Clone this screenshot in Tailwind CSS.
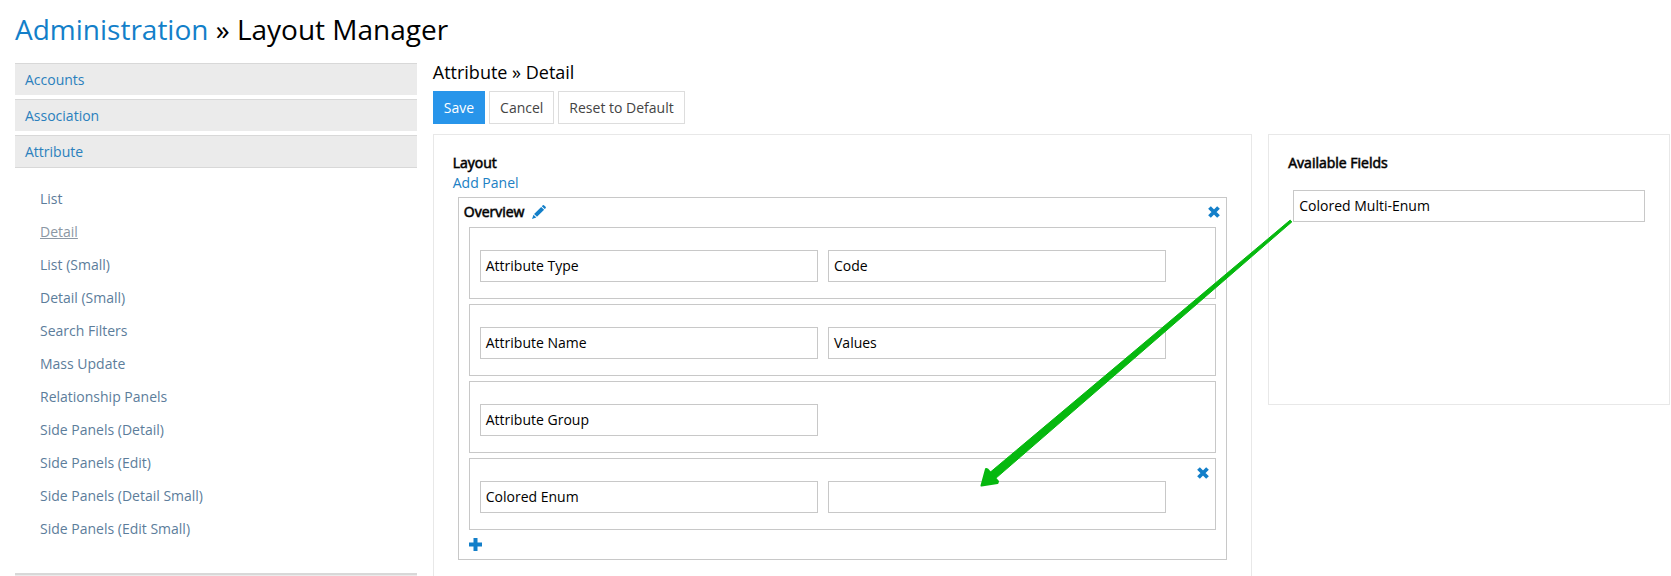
<!DOCTYPE html>
<html lang="en">
<head>
<meta charset="utf-8">
<meta name="viewport" content="width=device-width, initial-scale=1">
<title>Layout Manager</title>
<script src="https://cdn.jsdelivr.net/npm/@tailwindcss/browser@4"></script>
</head>
<body class="relative h-screen overflow-hidden bg-white pl-[15px] pr-px font-['Open_Sans',sans-serif] text-sm text-black">
<header class="pt-[9px] pb-3">
  <h1 class="text-[28px] leading-10"><a href="#" class="text-[#137fc9]">Administration</a> » Layout Manager</h1>
</header>
<div class="grid grid-cols-4 gap-4 pt-0.5">
  <nav aria-label="Layouts" class="flex flex-col gap-1">
    <a href="#" class="h-8 border-t border-[#d8d8d8] bg-[#ebebeb] px-2.5 py-1.5 leading-5 text-[#2a80bd]">Accounts</a>
    <a href="#" class="h-8 border-t border-[#d8d8d8] bg-[#ebebeb] px-2.5 py-1.5 leading-5 text-[#2a80bd]">Association</a>
    <div>
      <a href="#" class="block border-y border-[#d8d8d8] bg-[#ebebeb] px-2.5 pt-1.5 pb-[5px] leading-5 text-[#2a80bd]">Attribute</a>
      <ul class="flex flex-col gap-[13px] pt-[21px] pb-[34px] pl-[25px] leading-5 text-[#5c7d9b]">
        <li><a href="#">List</a></li>
        <li><a href="#" aria-current="page" class="text-[#8b97a4] underline">Detail</a></li>
        <li><a href="#">List (Small)</a></li>
        <li><a href="#">Detail (Small)</a></li>
        <li><a href="#">Search Filters</a></li>
        <li><a href="#">Mass Update</a></li>
        <li><a href="#">Relationship Panels</a></li>
        <li><a href="#">Side Panels (Detail)</a></li>
        <li><a href="#">Side Panels (Edit)</a></li>
        <li><a href="#">Side Panels (Detail Small)</a></li>
        <li><a href="#">Side Panels (Edit Small)</a></li>
      </ul>
      <div class="h-8 border-t-2 border-[#d8d8d8] bg-[#ebebeb]"></div>
    </div>
  </nav>
  <main class="col-span-3">
    <h2 class="pb-2.5 text-lg leading-[18px]">Attribute » Detail</h2>
    <div class="flex gap-1 leading-5 text-[#444]">
      <button type="button" class="border border-[#2895ea] bg-[#2895ea] px-2.5 pt-1.5 pb-[5px] text-white">Save</button>
      <button type="button" class="border border-[#ddd] px-2.5 pt-1.5 pb-[5px]">Cancel</button>
      <button type="button" class="border border-[#ddd] px-2.5 pt-1.5 pb-[5px]">Reset to Default</button>
    </div>
    <div class="grid grid-cols-3 items-start gap-4 pt-2.5">
      <section class="col-span-2 border border-[#e8e8e8] px-[19px] pt-[18px] pb-10">
        <h3 class="pb-px leading-[19px] [-webkit-text-stroke:1px_#00000099]">Layout</h3>
        <a href="#" class="block leading-[19px] text-[#2080c4]">Add Panel</a>
        <div class="mx-[5px] mt-[5px] border border-[#c8c8c8] px-2.5 pb-2">
          <div class="-mx-[5px] flex items-center gap-2 pt-1 pb-1.5 leading-[19px]">
            <h4 class="[-webkit-text-stroke:1px_#00000099]">Overview</h4>
            <button type="button" aria-label="Edit panel" class="text-[#137fc9]">
              <svg class="size-3.5" viewBox="0 0 14 14" fill="currentColor"><path d="M10.800 0.300Q11.500-.2 12.200.4L13.600 1.800Q14.200 2.500 13.600 3.200L12.700 4.100 9.800 1.300ZM9.200 1.900 12.100 4.700 5 11.800 2.100 9ZM1.500 9.700 4.300 12.500 0 14Z"/></svg>
            </button>
            <button type="button" aria-label="Remove panel" class="mr-px ml-auto text-[#137fc9]">
              <svg class="size-3" viewBox="0 0 12 12" fill="none" stroke="currentColor" stroke-width="3.800"><path d="M1.500 1.500 10.500 10.500M10.500 1.500 1.500 10.500"/></svg>
            </button>
          </div>
          <ul class="flex flex-col gap-[5px] leading-5">
            <li class="border border-[#c8c8c8] px-2.5 pt-[22px] pb-4">
              <ul class="mr-[39px] grid grid-cols-2 gap-2.5">
                <li class="h-8 border border-[#c8c8c8] px-[5px] py-[5px]">Attribute Type</li>
                <li class="h-8 border border-[#c8c8c8] px-[5px] py-[5px]">Code</li>
              </ul>
            </li>
            <li class="border border-[#c8c8c8] px-2.5 pt-[22px] pb-4">
              <ul class="mr-[39px] grid grid-cols-2 gap-2.5">
                <li class="h-8 border border-[#c8c8c8] px-[5px] py-[5px]">Attribute Name</li>
                <li class="h-8 border border-[#c8c8c8] px-[5px] py-[5px]">Values</li>
              </ul>
            </li>
            <li class="border border-[#c8c8c8] px-2.5 pt-[22px] pb-4">
              <ul class="mr-[39px] grid grid-cols-2 gap-2.5">
                <li class="h-8 border border-[#c8c8c8] px-[5px] py-[5px]">Attribute Group</li>
              </ul>
            </li>
            <li class="relative border border-[#c8c8c8] px-2.5 pt-[22px] pb-4">
              <ul class="mr-[39px] grid grid-cols-2 gap-2.5">
                <li class="h-8 border border-[#c8c8c8] px-[5px] py-[5px]">Colored Enum</li>
                <li class="h-8 border border-[#c8c8c8] px-[5px] py-[5px]"></li>
              </ul>
              <button type="button" aria-label="Remove row" class="absolute top-2 right-1.5 text-[#137fc9]">
                <svg class="size-3" viewBox="0 0 12 12" fill="none" stroke="currentColor" stroke-width="3.800"><path d="M1.500 1.500 10.500 10.500M10.500 1.500 1.500 10.500"/></svg>
              </button>
            </li>
          </ul>
          <button type="button" aria-label="Add row" class="mt-2 block text-[#137fc9]">
            <svg class="size-[13px]" viewBox="0 0 13 13" fill="none" stroke="currentColor" stroke-width="4"><path d="M6.500 0V13M0 6.500H13"/></svg>
          </button>
        </div>
      </section>
      <section class="min-h-[271px] border border-[#e8e8e8] px-[19px] pt-[18px]">
        <h3 class="pb-px leading-[19px] [-webkit-text-stroke:1px_#00000099]">Available Fields</h3>
        <ul class="mx-[5px] mt-[17px] leading-5">
          <li class="h-8 border border-[#c8c8c8] px-[5px] py-[5px]">Colored Multi-Enum</li>
        </ul>
      </section>
    </div>
  </main>
</div>
<!-- Drag hint from the available field to the empty cell -->
<svg class="pointer-events-none absolute top-[210px] left-[970px] h-[290px] w-[330px]" viewBox="970 210 330 290" fill="#06b80f" stroke="#06b80f" stroke-linejoin="round" aria-hidden="true">
  <path stroke-width="1" d="M1290.200 220.100 1291.800 221.900 995.200 478.800 989.800 472.600Z"/>
  <path stroke-width="2" d="M981.500 485.500 986 469 987.500 469.500 998 481.500 997.500 483Z"/>
</svg>
</body>
</html>
